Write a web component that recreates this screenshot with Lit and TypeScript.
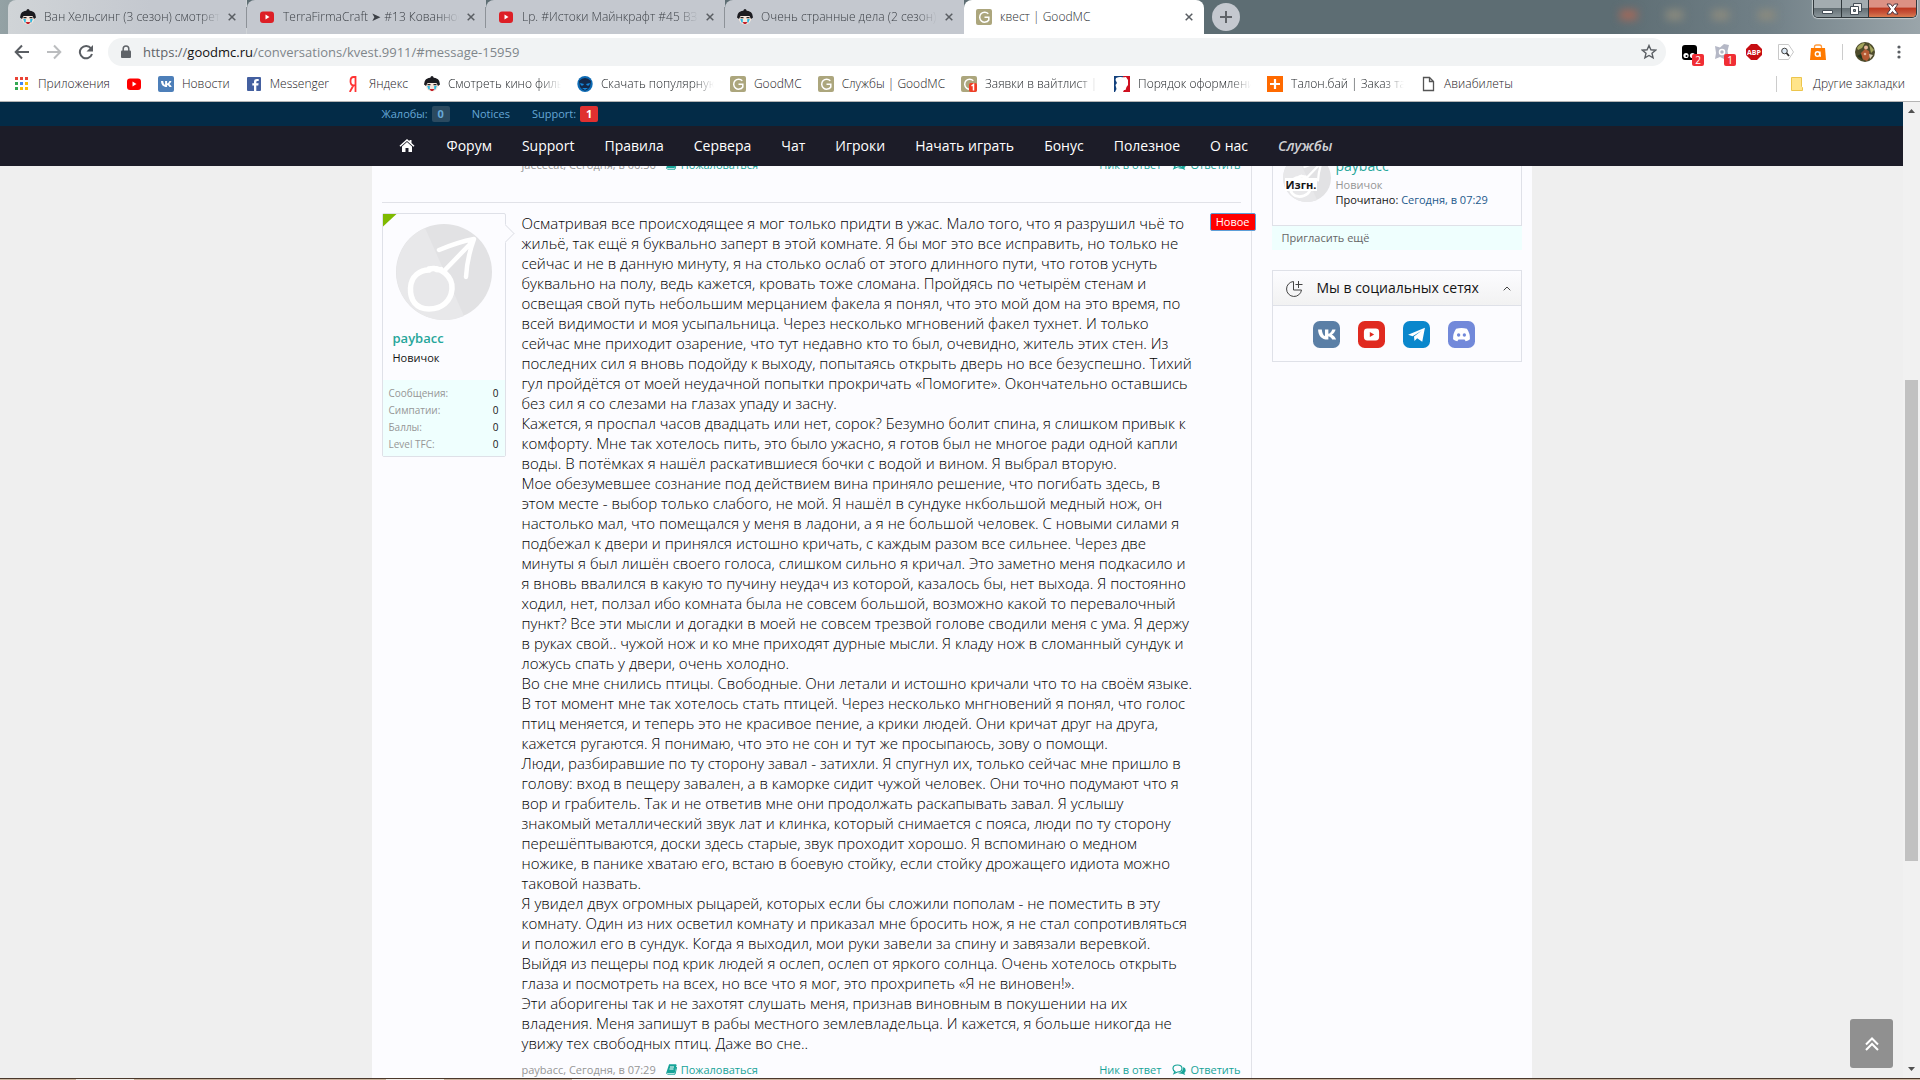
import { LitElement, html, css, svg, nothing } from "lit";
import { customElement } from "lit/decorators.js";
import { classMap } from "lit/directives/class-map.js";

const face = html`<svg class="i16" viewBox="0 0 16 16"><circle cx="8" cy="9" r="6.500" fill="#f6e6dc"/><path d="M0 8.500Q0 1.500 8 1.500t8 7l-2 1.500-1.500-3H3.500L2 10z" fill="#1b1b20"/><circle cx="8" cy="1.500" r="1.500" fill="#1b1b20"/><path d="M3.500 8.700h3M9.500 8.700h3" stroke="#222" stroke-width="1.300"/><path d="M3.200 10h2.600v3.500H4.500zM10.200 10h2.600l-1.300 3.500h-1.300z" fill="#2eb8e0"/><path d="M5.500 13h5l-1.500 2H7z" fill="#c3202a"/></svg>`;
const youtube = (c: string) => html`<svg class="i16" viewBox="0 0 16 16"><rect x="1" y="2.500" width="14" height="11.500" rx="3" fill=${c}/><path d="M6.500 5.500v5l4-2.500z" fill="#fff"/></svg>`;
const gLogo = html`<svg class="i16" viewBox="0 0 16 16"><rect width="16" height="16" rx="2" fill="#aca67d"/><path d="M12.300 4.700A5 5 0 1 0 12.800 11V8.300H8.500" fill="none" stroke="#fff" stroke-width="1.500"/></svg>`;
const gBadge = html`<svg class="i16" viewBox="0 0 16 16"><rect width="16" height="16" rx="2" fill="#aca67d"/><path d="M12.300 4.700A5 5 0 1 0 12.800 11" fill="none" stroke="#fff" stroke-width="1.500"/><rect x="8" y="7" width="8" height="9" rx="2" fill="#f03d25"/><path d="M10.500 10l2-1.500V14.500" fill="none" stroke="#fff" stroke-width="1.500"/></svg>`;
const vkPath = svg`<path d="M3 5h2.200c.200 2.300 1 3.600 1.900 3.900V5h2v2.600C10 7.400 10.900 6.400 11.400 5h2c-.300 1.200-1.200 2.400-2.200 3 1.100.600 2 1.600 2.500 3h-2.300c-.400-1-1.200-1.800-2.300-2v2h-.500C5.200 11 3.100 8.800 3 5z" fill="#fff"/>`;
const vk = html`<svg class="i16" viewBox="0 0 16 16"><rect width="16" height="16" rx="2" fill="#4d7fb9"/>${vkPath}</svg>`;
const fb = html`<svg class="i16" viewBox="0 0 16 16"><rect x="1" y="1" width="14" height="14" rx="1" fill="#4460a0"/><path d="M10.300 15V9.500h2l.300-2.200h-2.300V6q0-1 1.200-1h1.200V3h-1.800Q8 3 8 5.600v1.700H6.300v2.200H8V15z" fill="#fff"/></svg>`;
const ya = html`<svg class="i16" viewBox="0 0 16 16"><path d="M10.500 16V1H8.700Q5.500 1 5.500 5.200T8.700 9.300h1.800M8.500 9.300L4.800 16" fill="none" stroke="#f33" stroke-width="1.800"/></svg>`;
const mask = html`<svg class="i16" viewBox="0 0 16 16"><ellipse cx="8" cy="8" rx="7.700" ry="8" fill="#0d6bb5"/><path d="M2 5Q8-1 14 5l-1 6q-5 7-10 0z" fill="#12284a"/><path d="M3 7l4 1-1 1.500H4zM13 7L9 8l1 1.500h2zM5 12h6l-3 2z" fill="#1687dc"/></svg>`;
const profile = html`<svg class="i16" viewBox="0 0 16 16"><path d="M0 0h9v16H0z" fill="#12407c"/><path d="M9 0h7v16H9z" fill="#cf1020"/><path d="M2 2q3-1.500 5-1t5 0l2 3v5l-1.500 2-1 3H10l-1 2H1l1.500-3L1.500 9l1.500-2-1.500-3z" fill="#fff"/></svg>`;
const plus = html`<svg class="i16" viewBox="0 0 16 16"><path d="M0 0h16v16H0z" fill="#ff6a00"/><path d="M8 3v10M3 8h10" stroke="#fff" stroke-width="2.200"/></svg>`;
const sheet = html`<svg class="i16" viewBox="0 0 16 16"><path d="M3.500 1.500h6l4 4v9h-10zM9.500 1.500v4h4" fill="#fff" stroke="#555" stroke-width="1.300"/></svg>`;
const folder = html`<svg class="i16" viewBox="0 0 16 16"><path d="M2.500 1.500h10v9l1 1v3h-11z" fill="#ffe48a" stroke="#ecc54c"/></svg>`;
const apps = html`<svg class="i16" viewBox="0 0 16 16">${["#ea4335", "#ea4335", "#ea4335", "#34a853", "#4285f4", "#fbbc05", "#34a853", "#fbbc05", "#fbbc05"].map((c, i) => svg`<rect x=${1 + (i % 3) * 5} y=${1 + Math.floor(i / 3) * 5} width="3" height="3" fill=${c}/>`)}</svg>`;
const cross = html`<svg class="cross" viewBox="0 0 8 8"><path d="M.700.700l6.600 6.600M7.300.700L.700 7.300" stroke="#5a5e63" stroke-width="1.500"/></svg>`;
const male = html`<svg class="male" viewBox="0 0 96 96"><circle cx="48" cy="48" r="48" fill="#e2e2e4"/><path d="M29 4L68 92A48 48 0 1 1 29 4z" fill="#e8e8ea"/><path d="M33 45C45 42 57 53 56 65S46 85 33 85 14 76 14.500 64 24 46 33 46q2-2 5-1.500 4 2 7 1" fill="none" stroke="#fff" stroke-width="5.500" stroke-linecap="round"/><path d="M49 46L77 17M43 26Q62 18 78 15Q71 34 70 53" fill="none" stroke="#fff" stroke-width="4.500" stroke-linecap="round" stroke-linejoin="round"/></svg>`;
const book = html`<svg class="i12" viewBox="0 0 12 12"><path d="M4 1h7L9.300 8.500H2.500q-1.500 1 0 1.700H10L11.700 3" fill="none" stroke="#17a398"/><path d="M4 .500h7.500L9.500 8.800H2.200L1 9.500z" fill="#17a398"/><path d="M5 3h4M4.500 5h4" stroke="#fff"/></svg>`;
const chat = html`<svg class="chat" viewBox="0 0 14 12"><path d="M5.500 1C8.200 1 10 2.500 10 4.500S8.200 8 5.500 8L2 9.500 3 7.500Q1 6.500 1 4.500 1 1 5.500 1z" fill="none" stroke="#17a398" stroke-width="1.200"/><path d="M11.300 3Q13.700 4 13.700 6.300 13.700 8 12.300 9l1 2-3.300-1.200Q7.500 10 6 9q5.300-.500 5.300-6z" fill="#17a398"/></svg>`;

const tabs = [
  { icon: face, title: "Ван Хельсинг (3 сезон) смотреть" },
  { icon: youtube("#dd1f26"), title: "TerraFirmaCraft ➤ #13 Кованное" },
  { icon: youtube("#dd1f26"), title: "Lp. #Истоки Майнкрафт #45 ВЗР" },
  { icon: face, title: "Очень странные дела (2 сезон)" },
  { icon: gLogo, title: "квест | GoodMC", active: true },
];

const bookmarks = [
  { icon: apps, title: "Приложения" },
  { icon: youtube("#f00"), title: "" },
  { icon: vk, title: "Новости" },
  { icon: fb, title: "Messenger" },
  { icon: ya, title: "Яндекс" },
  { icon: face, title: "Смотреть кино филь", cut: true },
  { icon: mask, title: "Скачать популярную", cut: true },
  { icon: gLogo, title: "GoodMC" },
  { icon: gLogo, title: "Службы | GoodMC" },
  { icon: gBadge, title: "Заявки в вайтлист | G", cut: true },
  { icon: profile, title: "Порядок оформлени", cut: true },
  { icon: plus, title: "Талон.бай | Заказ тал", cut: true },
  { icon: sheet, title: "Авиабилеты" },
];

@customElement("browser-chrome")
export class BrowserChrome extends LitElement {
  static styles = css`
    :host { display: block; font: 300 12px/16px "Open Sans", "Noto Sans", sans-serif; color: #1c2024; }
    * { box-sizing: border-box; }
    button { border: 0; padding: 0; background: none; font: inherit; color: inherit; display: flex; align-items: center; justify-content: center; }
    a { color: inherit; text-decoration: none; }
    svg { display: block; flex: none; }
    .i16 { width: 16px; height: 16px; }
    .cross { width: 8px; height: 8px; }
    .strip { display: flex; height: 34px; padding-left: 8px; background: linear-gradient(90deg, #94a2a5 0, #5d6d73 10%, #5d6d73 84%, #718087 92%, #9aa5aa 100%); }
    .tab { display: flex; align-items: center; gap: 8px; width: 239px; height: 34px; padding: 0 11px 0 12px; background: #c4c8cf; color: #3c4046; }
    .tab:first-child { border-radius: 8px 0 0 0; background: linear-gradient(90deg, #d0d4d7, #c4c8cf 60%); }
    .tab + .tab { border-radius: 8px 0 0 0; }
    .tab.sep { border-right: 1px solid #8d9298; padding-right: 10px; border-image: linear-gradient(transparent 8px, #8d9298 8px, #8d9298 27px, transparent 27px) 1; }
    .tab.active { background: #fff; color: #2a2e32; width: 240px; border-radius: 8px 8px 0 0; }
    .title { flex: 1; min-width: 0; overflow: hidden; white-space: nowrap; }
    .fade { -webkit-mask-image: linear-gradient(90deg, #000 calc(100% - 20px), transparent); }
    .add { width: 28px; height: 28px; margin: 3px 0 0 8px; border-radius: 50%; background: #c4c8cf; }
    .add svg { width: 14px; height: 14px; }
    .tray { display: flex; gap: 29px; margin: 10px 38px 0 auto; }
    .tray i { width: 17px; height: 10px; background: #8c8b7e; filter: blur(4px); }
    .tray i:first-child { background: #a3695a; }
    .win { display: flex; height: 18px; margin-right: 3px; border: 1px solid #30383c; border-top: 0; border-radius: 0 0 5px 5px; overflow: hidden; box-shadow: 0 0 1px 1px #c4cbce; }
    .win button { width: 28px; background: linear-gradient(#a3acb0 0 45%, #646f74 50%, #8b969b); border-right: 1px solid #30383c; }
    .win .max { width: 27px; }
    .win .x { width: 47px; border: 0; background: linear-gradient(#dc9184 0 40%, #bd3a22 50%, #c7543a 75%, #da7c50); }
    .win svg { width: 13px; height: 12px; }
    .bar { display: flex; align-items: center; height: 32px; padding: 4px 13px 0 14px; background: #fff; }
    .bar .nav { width: 16px; height: 16px; margin-right: 16px; }
    .bar .nav svg { width: 16px; height: 16px; }
    .omni { flex: 1; display: flex; align-items: center; gap: 11px; height: 28px; margin: 0 16px 0 -2px; padding: 0 9px 0 12px; border-radius: 14px; background: #f1f3f4; }
    .omni .lock { width: 12px; height: 14px; }
    .addr { flex: 1; font-size: 13px; font-weight: 400; line-height: 18px; color: #80868b; white-space: nowrap; }
    .addr b { font-weight: 400; color: #111; }
    .addr em { font-style: normal; color: #5f6368; }
    .ext { display: flex; align-items: center; gap: 16px; font-weight: 400; }
    .ext button { position: relative; width: 16px; height: 20px; }
    .count { position: absolute; left: 10px; top: 12px; width: 12px; height: 12px; border-radius: 2px; background: #f02e35; color: #fff; font-size: 10px; line-height: 12px; text-align: center; }
    .line { width: 1px; height: 16px; background: #ccc; }
    .ext .me, .me svg { width: 20px; height: 20px; }
    .ext .me { margin-left: -4px; }
    .marks { display: flex; align-items: center; gap: 16px; height: 36px; padding: 0 15px 0 14px; background: #fff; border-bottom: 1px solid #b4b4b4; }
    .mark { display: flex; align-items: center; gap: 8px; white-space: nowrap; }
    .mark .fade { overflow: hidden; width: 113px; }
    .other { margin-left: auto; display: flex; align-items: center; gap: 12px; }
  `;

  render() {
    return html`
      <div class="strip">
        ${tabs.map((t, i) => html`<div class=${classMap({ tab: true, active: !!t.active, sep: i < 3 })}>
          ${t.icon}<span class=${classMap({ title: true, fade: !t.active })}>${t.title}</span>
          <button aria-label="Закрыть">${cross}</button></div>`)}
        <button class="add" aria-label="Новая вкладка"><svg viewBox="0 0 14 14"><path d="M7 1v12M1 7h12" stroke="#5f6368" stroke-width="2"/></svg></button>
        <div class="tray"><i></i><i></i><i></i><i></i></div>
        <div class="win">
          <button aria-label="Свернуть"><svg viewBox="0 0 13 12"><path d="M1.500 7.500h10v3h-10z" fill="#fff" stroke="#444e57"/></svg></button>
          <button class="max" aria-label="Развернуть"><svg viewBox="0 0 13 12"><path d="M4.500.500h8v8h-8z" fill="#eee" stroke="#444e57"/><path d="M1.500 3.500h8v8h-8z" fill="#fff" stroke="#444e57"/><path d="M4.500 6.500h2v2h-2z" fill="#8a949b" stroke="#444e57"/></svg></button>
          <button class="x" aria-label="Закрыть"><svg viewBox="0 0 13 12"><path d="M1 1h3.500l2 2.500 2-2.500H12L8.500 6l3.500 5H8.500l-2-2.500-2 2.500H1l3.500-5z" fill="#fff" stroke="#4b3540"/></svg></button>
        </div>
      </div>
      <div class="bar">
        <button class="nav" aria-label="Назад"><svg viewBox="0 0 16 16"><path d="M15 8H2M8 1.500L1.700 8 8 14.500" fill="none" stroke="#5a5e63" stroke-width="2"/></svg></button>
        <button class="nav" aria-label="Вперёд"><svg viewBox="0 0 16 16"><path d="M1 8h13M8 1.500L14.300 8 8 14.500" fill="none" stroke="#bbbdbf" stroke-width="2"/></svg></button>
        <button class="nav" aria-label="Обновить"><svg viewBox="0 0 16 16"><path d="M13 4.300A6.200 6.200 0 1 0 14 10" fill="none" stroke="#5a5e63" stroke-width="2"/><path d="M15 1v6.500H8.500z" fill="#5a5e63"/></svg></button>
        <div class="omni">
          <svg class="lock" viewBox="0 0 12 14"><path d="M2 5.500h8q1 0 1 1V12q0 1-1 1H2q-1 0-1-1V6.500q0-1 1-1z" fill="#5f6368"/><path d="M3.200 6V3.700a2.800 2.800 0 0 1 5.600 0V6" fill="none" stroke="#5f6368" stroke-width="1.500"/></svg>
          <div class="addr" role="textbox" aria-label="Адрес" contenteditable="plaintext-only"><em>https://</em><b>goodmc.ru</b>/conversations/kvest.9911/#message-15959</div>
          <button aria-label="В закладки"><svg class="i16" viewBox="0 0 16 16"><path d="M8 1.500l1.900 4.300 4.700.400-3.600 3.100 1.100 4.600L8 11.500l-4.100 2.400L5 9.300 1.400 6.200l4.700-.400z" fill="none" stroke="#5a5e63" stroke-width="1.400"/></svg></button>
        </div>
        <div class="ext">
          <button aria-label="Tampermonkey"><svg class="i16" viewBox="0 0 16 16"><rect y="1" width="15" height="15" rx="3"/><circle cx="4" cy="11.500" r="2.600" fill="#fff"/><circle cx="10.500" cy="11.500" r="2.600" fill="#fff"/><circle cx="4.500" cy="12" r="1"/></svg><span class="count">2</span></button>
          <button aria-label="Avast"><svg class="i16" viewBox="0 0 16 16"><path d="M1 2l5 1.500L10 0l5 1-1.500 6 1 5-4.500 3-4-2-5 2 1-6z" fill="#b5b8c6"/><circle cx="8" cy="8" r="2.500" fill="none" stroke="#fff" stroke-width="1.500"/></svg><span class="count">1</span></button>
          <button aria-label="Adblock Plus"><svg class="i16" viewBox="0 0 16 16"><path d="M5 0h6l5 5v6l-5 5H5l-5-5V5z" fill="#c70d12"/><text x="8" y="10.500" font-size="7" font-weight="700" fill="#fff" text-anchor="middle">ABP</text></svg></button>
          <button aria-label="Поиск"><svg class="i16" viewBox="0 0 16 16"><path d="M.500.500h10l5 7.500-5 7.500H.500z" fill="#fff" stroke="#c8c8c8"/><circle cx="6.500" cy="7" r="2.800" fill="#dce9f5" stroke="#444"/><path d="M8.500 9l2.500 3" stroke="#333" stroke-width="1.800"/></svg></button>
          <button aria-label="AliExpress"><svg class="i16" viewBox="0 0 16 16"><path d="M1 4h14l1 12H0z" fill="#ff7a00"/><path d="M4.500 4V3q0-2 2-2h3q2 0 2 2v1" fill="none" stroke="#ff9a3d" stroke-width="1.300"/><circle cx="7.500" cy="10" r="2.200" fill="none" stroke="#fff" stroke-width="1.400"/><path d="M10 7.500v4.500h1" fill="none" stroke="#fff" stroke-width="1.300"/></svg></button>
          <i class="line"></i>
          <button class="me" aria-label="Профиль"><svg viewBox="0 0 20 20"><circle cx="10" cy="10" r="10" fill="#4d4b2c"/><path d="M2 6q3-5 8-5L7 6 3 8zM14 2l5 6-3 3z" fill="#a3a55c"/><path d="M6 11l4-4 4 2 1 6-3 4-5-2z" fill="#b65a34"/><circle cx="11" cy="5.500" r="2" fill="#e7b79b"/><circle cx="10" cy="12" r="1.300" fill="#e7b79b"/><path d="M2 14l4-2 2 6z" fill="#22351c"/><path d="M14 12l4 1-3 4z" fill="#d9cfb8"/></svg></button>
          <button aria-label="Меню"><svg class="i16" viewBox="0 0 16 16"><g fill="#5a5e63"><circle cx="8" cy="3" r="1.600"/><circle cx="8" cy="8" r="1.600"/><circle cx="8" cy="13" r="1.600"/></g></svg></button>
        </div>
      </div>
      <nav class="marks">
        ${bookmarks.map((b) => html`<a class="mark" href="#" aria-label=${b.title || "YouTube"}>${b.icon}${b.title ? html`<span class=${b.cut ? "fade" : ""}>${b.title}</span>` : nothing}</a>`)}
        <div class="other"><i class="line"></i><a class="mark" href="#">${folder}<span>Другие закладки</span></a></div>
      </nav>`;
  }
}

const story = `Осматривая все происходящее я мог только придти в ужас. Мало того, что я разрушил чьё то
жильё, так ещё я буквально заперт в этой комнате. Я бы мог это все исправить, но только не
сейчас и не в данную минуту, я на столько ослаб от этого длинного пути, что готов уснуть
буквально на полу, ведь кажется, кровать тоже сломана. Пройдясь по четырём стенам и
освещая свой путь небольшим мерцанием факела я понял, что это мой дом на это время, по
всей видимости и моя усыпальница. Через несколько мгновений факел тухнет. И только
сейчас мне приходит озарение, что тут недавно кто то был, очевидно, житель этих стен. Из
последних сил я вновь подойду к выходу, попытаясь открыть дверь но все безуспешно. Тихий
гул пройдётся от моей неудачной попытки прокричать «Помогите». Окончательно оставшись
без сил я со слезами на глазах упаду и засну.
Кажется, я проспал часов двадцать или нет, сорок? Безумно болит спина, я слишком привык к
комфорту. Мне так хотелось пить, это было ужасно, я готов был не многое ради одной капли
воды. В потёмках я нашёл раскатившиеся бочки с водой и вином. Я выбрал вторую.
Мое обезумевшее сознание под действием вина приняло решение, что погибать здесь, в
этом месте - выбор только слабого, не мой. Я нашёл в сундуке нкбольшой медный нож, он
настолько мал, что помещался у меня в ладони, а я не большой человек. С новыми силами я
подбежал к двери и принялся истошно кричать, с каждым разом все сильнее. Через две
минуты я был лишён своего голоса, слишком сильно я кричал. Это заметно меня подкасило и
я вновь ввалился в какую то пучину неудач из которой, казалось бы, нет выхода. Я постоянно
ходил, нет, ползал ибо комната была не совсем большой, возможно какой то перевалочный
пункт? Все эти мысли и догадки в моей не совсем трезвой голове сводили меня с ума. Я держу
в руках свой.. чужой нож и ко мне приходят дурные мысли. Я кладу нож в сломанный сундук и
ложусь спать у двери, очень холодно.
Во сне мне снились птицы. Свободные. Они летали и истошно кричали что то на своём языке.
В тот момент мне так хотелось стать птицей. Через несколько мнгновений я понял, что голос
птиц меняется, и теперь это не красивое пение, а крики людей. Они кричат друг на друга,
кажется ругаются. Я понимаю, что это не сон и тут же просыпаюсь, зову о помощи.
Люди, разбиравшие по ту сторону завал - затихли. Я спугнул их, только сейчас мне пришло в
голову: вход в пещеру завален, а в каморке сидит чужой человек. Они точно подумают что я
вор и грабитель. Так и не ответив мне они продолжать раскапывать завал. Я услышу
знакомый металлический звук лат и клинка, который снимается с пояса, люди по ту сторону
перешёптываются, доски здесь старые, звук проходит хорошо. Я вспоминаю о медном
ножике, в панике хватаю его, встаю в боевую стойку, если стойку дрожащего идиота можно
таковой назвать.
Я увидел двух огромных рыцарей, которых если бы сложили пополам - не поместить в эту
комнату. Один из них осветил комнату и приказал мне бросить нож, я не стал сопротивляться
и положил его в сундук. Когда я выходил, мои руки завели за спину и завязали веревкой.
Выйдя из пещеры под крик людей я ослеп, ослеп от яркого солнца. Очень хотелось открыть
глаза и посмотреть на всех, но все что я мог, это прохрипеть «Я не виновен!».
Эти аборигены так и не захотят слушать меня, признав виновным в покушении на их
владения. Меня запишут в рабы местного землевладельца. И кажется, я больше никогда не
увижу тех свободных птиц. Даже во сне..`;

const menu = ["Форум", "Support", "Правила", "Сервера", "Чат", "Игроки", "Начать играть", "Бонус", "Полезное", "О нас"];
const stats = ["Сообщения:", "Симпатии:", "Баллы:", "Level TFC:"];

const social = [
  { name: "ВКонтакте", color: "#5b7fa6", art: vkPath },
  { name: "YouTube", color: "#e02a20", art: svg`<rect x="3.500" y="4.500" width="9" height="7" rx="2" fill="#fff"/><path d="M7 6.500v3L9.600 8z" fill="#e02a20"/>` },
  { name: "Telegram", color: "#0a87cc", art: svg`<path d="M3 8.200L13 4l-1.600 8.300-3-2.100-1.600 1.600-.300-2.600L11 5.800 5.700 9z" fill="#fff"/>` },
  { name: "Discord", color: "#7289da", art: svg`<path d="M4.800 4.600Q8 3.600 11.200 4.600 13.200 7.500 13 10.800q-1 .900-2.500 1.200l-.700-1.100H6.200L5.500 12Q4 11.700 3 10.800 2.800 7.500 4.800 4.600z" fill="#fff"/><circle cx="6.300" cy="8.300" r="1" fill="#7289da"/><circle cx="9.700" cy="8.300" r="1" fill="#7289da"/>` },
];

@customElement("forum-page")
export class ForumPage extends LitElement {
  static styles = css`
    :host { display: flex; flex-direction: column; flex: 1; min-height: 0; min-width: 0; position: relative; background: #efefef; font: 11px/14px "Open Sans", "Noto Sans", sans-serif; color: #141414; }
    * { box-sizing: border-box; }
    a { color: inherit; text-decoration: none; }
    p, dl, dd, h3 { margin: 0; font: inherit; }
    svg { display: block; flex: none; }
    button { border: 0; padding: 0; font: inherit; background: none; }
    .wrap { width: 100%; max-width: 1160px; margin: 0 auto; }
    .mod { flex: none; background: #032b47; color: #65a7d6; }
    .mod .wrap { display: flex; align-items: center; gap: 22px; height: 24px; padding-left: 10px; }
    .mod a { display: flex; align-items: center; gap: 4px; }
    .mod b { width: 18px; height: 16px; border-radius: 2px; background: #2b4a60; line-height: 16px; text-align: center; }
    .mod .hot { background: #e03030; color: #fff; }
    .menu { flex: none; background: #1c1c28; color: #fff; font-size: 14px; }
    .menu .wrap { display: flex; align-items: center; height: 40px; padding-left: 12px; }
    .menu a { padding: 0 15px; line-height: 40px; }
    .menu .home { padding-right: 17px; }
    .menu .home svg { width: 16px; height: 40px; }
    .menu em { color: #d0d0d4; font-weight: 600; }
    .scroll { flex: 1; min-height: 0; overflow: hidden; }
    .cols { display: flex; align-items: flex-start; min-height: 100%; background: #fcfcff; }
    .main { flex: 1; min-width: 0; padding: 0 10px; border-right: 1px solid #e1e2e8; align-self: stretch; }
    .foot { display: flex; align-items: center; color: #969696; height: 16px; }
    .foot a { display: flex; align-items: center; gap: 4px; color: #17a398; }
    .foot .report { margin-left: 9px; }
    .foot .nick { margin-left: auto; margin-right: 11px; }
    .i12 { width: 12px; height: 12px; }
    .chat { width: 14px; height: 12px; }
    .prev { margin: -9px 0 29px 140px; }
    .msg { display: grid; grid-template-columns: 124px minmax(0, 1fr); column-gap: 16px; border-top: 1px solid #e1e2e8; padding-top: 10px; position: relative; }
    .user { position: relative; align-self: start; border: 1px solid #dfe1e8; border-radius: 2px; background: #fcfcff; }
    .corner { position: absolute; left: 0; top: 0; width: 14px; height: 13px; background: #7fba00; clip-path: polygon(0 0, 100% 0, 0 100%); }
    .arrow { position: absolute; right: -7px; top: 13px; width: 13px; height: 13px; border: solid #e5e6ec; border-width: 1px 1px 0 0; background: #fcfcff; transform: rotate(45deg); }
    .user .male { width: 96px; height: 96px; margin: 10px auto 8px 13px; }
    .name { display: block; padding-left: 10px; color: #26a69a; font-size: 13px; font-weight: 600; line-height: 20px; }
    .rank { padding-left: 10px; line-height: 20px; margin-bottom: 12px; }
    .stats { background: #effffe; padding: 5px 6px 3px 6px; font-size: 10px; line-height: 17px; color: #969696; }
    .stats div { display: flex; justify-content: space-between; }
    .stats dd { color: #141414; }
    .text { font-size: 15px; font-weight: 300; line-height: 20px; color: #000; white-space: pre-line; }
    .new { position: absolute; right: -15px; top: 10px; height: 18px; padding: 0 5px; border: 1px solid #5d9fd8; border-radius: 2px; background: #f00; color: #fff; font-weight: 400; line-height: 16px; }
    .body .foot { margin-top: 9px; }
    .side { flex: none; width: 280px; padding: 0 10px 0 20px; }
    .people { display: flex; gap: 5px; height: 60px; padding: 0 10px; border: 1px solid #dfe1e8; border-top: 0; }
    .ava { position: relative; width: 48px; height: 48px; margin-top: -12px; }
    .ava .male { width: 48px; height: 48px; }
    .ban { position: absolute; left: 2px; top: 24px; padding: 0 1px; background: #fff; font-weight: 700; line-height: 13px; white-space: nowrap; }
    .people .name { padding: 0; font-size: 14px; font-weight: 400; margin-top: -11px; line-height: 22px; }
    .people .grey { color: #969696; line-height: 16px; }
    .people .blue { color: #1d5a8c; }
    .invite { display: block; height: 24px; padding-left: 10px; line-height: 24px; background: #effffe; color: #666; }
    .soc { margin-top: 20px; border: 1px solid #dfe1e8; }
    .soc h3 { display: flex; align-items: center; height: 35px; padding: 0 10px 0 13px; border-bottom: 1px solid #dfe1e8; background: linear-gradient(#fcfcff, #f2f2f2); font-size: 14px; gap: 14px; }
    .soc h3 svg { width: 17px; height: 17px; }
    .soc h3 button { margin-left: auto; }
    .soc h3 .up { width: 8px; height: 5px; }
    .links { display: flex; justify-content: center; gap: 18px; padding: 15px 6px 13px 0; }
    .links svg { width: 27px; height: 27px; }
    .top { position: absolute; right: 10px; bottom: 10px; width: 43px; height: 49px; border-radius: 3px; background: #909090; display: flex; align-items: center; justify-content: center; }
    .top svg { width: 14px; height: 14px; }
  `;

  foot(cls: string, who: string) {
    return html`<div class="foot ${cls}"><span>${who}</span><a class="report" href="#">${book}Пожаловаться</a>
      <a class="nick" href="#">Ник в ответ</a><a class="reply" href="#">${chat}Ответить</a></div>`;
  }

  render() {
    return html`
      <div class="mod"><div class="wrap"><a href="#">Жалобы: <b>0</b></a><a href="#">Notices</a><a href="#">Support: <b class="hot">1</b></a></div></div>
      <nav class="menu"><div class="wrap">
        <a class="home" href="#" aria-label="Главная"><svg viewBox="0 0 16 40"><path d="M8 13l2.500 2.300V14h2v3l3 2.800-1 1L8 14.900l-6.500 5.900-1-1zM8 16l5 4.600V26H9.500v-4h-3v4H3v-5.400z" fill="#fff"/></svg></a>
        ${menu.map((m) => html`<a href="#">${m}</a>`)}<a href="#"><em>Службы</em></a>
      </div></nav>
      <div class="scroll"><div class="wrap cols">
        <main class="main">
          ${this.foot("prev", "jaececat, Сегодня, в 06:36")}
          <article class="msg">
            <aside class="user">
              <i class="arrow"></i><i class="corner"></i>
              ${male}
              <a class="name" href="#">paybacc</a>
              <div class="rank">Новичок</div>
              <dl class="stats">${stats.map((s) => html`<div><dt>${s}</dt><dd>0</dd></div>`)}</dl>
            </aside>
            <div class="body">
              <div class="text">${story}</div>
              ${this.foot("", "paybacc, Сегодня, в 07:29")}
            </div>
            <strong class="new">Новое</strong>
          </article>
        </main>
        <aside class="side">
          <div class="people">
            <div class="ava">${male}<span class="ban">Изгн.</span></div>
            <div><a class="name" href="#">paybacc</a><div class="grey">Новичок</div><div>Прочитано: <span class="blue">Сегодня, в 07:29</span></div></div>
          </div>
          <a class="invite" href="#">Пригласить ещё</a>
          <section class="soc">
            <h3><svg viewBox="0 0 17 17"><path d="M7.500 1.500A7.500 7.500 0 1 0 15.500 10M7.500 1.500V10h8M12.500 1v7M9.500 4.500h7" fill="none" stroke="#444"/></svg>Мы в социальных сетях
              <button aria-label="Свернуть"><svg class="up" viewBox="0 0 8 5"><path d="M.700 4.300L4 1l3.300 3.300" fill="none" stroke="#444"/></svg></button></h3>
            <div class="links">${social.map((s) => html`<a href="#" aria-label=${s.name}><svg viewBox="0 0 16 16"><rect width="16" height="16" rx="4" fill=${s.color}/>${s.art}</svg></a>`)}</div>
          </section>
        </aside>
      </div></div>
      <button class="top" aria-label="Наверх"><svg viewBox="0 0 14 14"><path d="M1 7.500l6-6 6 6M1 13l6-6 6 6" fill="none" stroke="#fff" stroke-width="2"/></svg></button>`;
  }
}

@customElement("app-root")
export class AppRoot extends LitElement {
  static styles = css`
    :host { display: flex; flex-direction: column; height: 100vh; overflow: hidden; }
    .view { flex: 1; min-height: 0; display: flex; }
    .rail { flex: none; width: 17px; display: flex; flex-direction: column; align-items: center; justify-content: space-between; background: #f1f1f1; padding: 7px 0; }
    .rail svg { width: 7px; height: 4px; }
    .thumb { width: 13px; flex: 0 0 50%; margin-top: 60px; background: #c1c1c1; }
    .task { flex: none; height: 1px; border-top: 1px solid #4a382c; background: linear-gradient(90deg, #c9b29c 76px, #f3ede6 76px, #f3ede6 134px, #c9b29c 134px, #c9b29c 386px, #f3ede6 386px, #f3ede6 444px, #c9b29c 444px, #c9b29c 572px, #f3ede6 572px, #f3ede6 710px, #c9b29c 710px); }
  `;

  render() {
    return html`
      <browser-chrome></browser-chrome>
      <div class="view">
        <forum-page></forum-page>
        <div class="rail">
          <svg viewBox="0 0 7 4"><path d="M0 4l3.500-4L7 4z" fill="#505050"/></svg>
          <i class="thumb"></i>
          <svg viewBox="0 0 7 4"><path d="M0 0l3.500 4L7 0z" fill="#505050"/></svg>
        </div>
      </div>
      <div class="task"></div>`;
  }
}
